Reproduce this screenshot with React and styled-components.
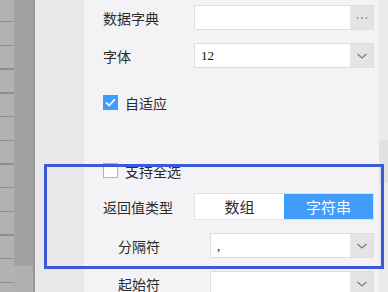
import React from 'react'
import styled, { createGlobalStyle } from 'styled-components'

const Global = createGlobalStyle`
  html, body { margin: 0; padding: 0; }
  body { font-family: "Noto Sans CJK SC", "Noto Sans", sans-serif; }
`

const Page = styled.div`
  position: relative;
  display: flex;
  width: 388px;
  height: 292px;
  overflow: hidden;
  background: #f3f3f5;
`

const RowStrip = styled.div`
  width: 14px;
  background: repeating-linear-gradient(
    to bottom,
    #b2b2b2 0 21px,
    #8e8e8e 21px 22.4px,
    #b2b2b2 22.4px 23.7px
  );
`

const DarkStrip = styled.div`
  width: 19px;
  display: flex;
  flex-direction: column;
  background: #b0b0b0;
`

const DarkFill = styled.div`
  height: 266px;
  background: #a2a2a2;
`

const Divider = styled.div`
  width: 2px;
  background: #979797;
`

const SidePanel = styled.div`
  width: 49px;
  background: #e9e9e9;
`

const Main = styled.div`
  flex: 1;
  display: flex;
  flex-direction: column;
  padding: 5px 5px 0 19px;
  color: #2b2b2b;
  font-size: 14px;
`

const Scrollbar = styled.div`
  width: 9px;
  background: #ebebed;
  display: flex;
  flex-direction: column;
`

const Thumb = styled.div`
  margin-top: 140px;
  height: 43px;
  background: #e1e1e3;
`

const Row = styled.div`
  display: flex;
  align-items: center;
  height: ${p => p.$h || 25}px;
  margin-top: ${p => p.$mt || 0}px;
  padding-left: ${p => (p.$indent ? 15 : 0)}px;
`

const Label = styled.div`
  width: ${p => (p.$indent ? 92 : 91)}px;
  flex: none;
  white-space: nowrap;
  line-height: 20px;
`

const Field = styled.div`
  flex: 1;
  display: flex;
  height: 25px;
  box-sizing: border-box;
  border: 1px solid #dedee0;
  background: #fff;
`

const FieldText = styled.div`
  flex: 1;
  padding-left: 6px;
  font-family: "Liberation Serif", serif;
  font-size: 13px;
  line-height: 23px;
  color: #111;
`

const FieldButton = styled.div`
  width: 23px;
  display: flex;
  align-items: center;
  justify-content: center;
  background: #e4e4e6;
  color: #8a8a8a;
`

const Check = styled.span`
  width: 15px;
  height: 15px;
  box-sizing: border-box;
  margin-right: 7px;
  display: inline-flex;
  align-items: center;
  justify-content: center;
  border: 1px solid ${p => (p.$on ? '#3f9cfb' : '#b5b5b5')};
  background: ${p => (p.$on ? '#3f9cfb' : '#fff')};
`

const Segmented = styled.div`
  flex: 1;
  display: flex;
  height: 27px;
  box-sizing: border-box;
  border: 1px solid #e2e2e4;
  background: #fff;
`

const Segment = styled.div`
  flex: 1;
  display: flex;
  align-items: center;
  justify-content: center;
  font-size: 15px;
  background: ${p => (p.$active ? '#409dfb' : '#fff')};
  color: ${p => (p.$active ? '#fff' : '#2b2b2b')};
`

const Highlight = styled.div`
  position: absolute;
  left: 44px;
  top: 164px;
  width: 340px;
  height: 105px;
  box-sizing: border-box;
  border: 3px solid #3a5ad9;
  pointer-events: none;
`

const Chevron = () => (
  <svg width="12" height="8" viewBox="0 0 12 8">
    <path d="M1.5 2 L6 6 L10.5 2" fill="none" stroke="#7d7d7d" strokeWidth="1.3" />
  </svg>
)

const Dots = () => (
  <svg width="14" height="4" viewBox="0 0 14 4">
    <circle cx="2.5" cy="2" r="1" fill="#9a9a9a" />
    <circle cx="7" cy="2" r="1" fill="#9a9a9a" />
    <circle cx="11.5" cy="2" r="1" fill="#9a9a9a" />
  </svg>
)

const Tick = () => (
  <svg width="11" height="9" viewBox="0 0 11 9">
    <path d="M1.2 4.6 L4.2 7.5 L9.8 1.4" fill="none" stroke="#fff" strokeWidth="1.7" />
  </svg>
)

export default function App() {
  return (
    <Page>
      <Global />
      <RowStrip />
      <DarkStrip>
        <DarkFill />
      </DarkStrip>
      <Divider />
      <SidePanel />
      <Main>
        <Row>
          <Label>数据字典</Label>
          <Field>
            <FieldText />
            <FieldButton><Dots /></FieldButton>
          </Field>
        </Row>
        <Row $mt={13}>
          <Label>字体</Label>
          <Field>
            <FieldText>12</FieldText>
            <FieldButton><Chevron /></FieldButton>
          </Field>
        </Row>
        <Row $h={15} $mt={27}>
          <Check $on><Tick /></Check>
          <span>自适应</span>
        </Row>
        <Row $h={15} $mt={53}>
          <Check />
          <span>支持全选</span>
        </Row>
        <Row $h={27} $mt={15}>
          <Label>返回值类型</Label>
          <Segmented>
            <Segment>数组</Segment>
            <Segment $active>字符串</Segment>
          </Segmented>
        </Row>
        <Row $mt={13} $indent>
          <Label $indent>分隔符</Label>
          <Field>
            <FieldText>,</FieldText>
            <FieldButton><Chevron /></FieldButton>
          </Field>
        </Row>
        <Row $mt={13} $indent>
          <Label $indent>起始符</Label>
          <Field>
            <FieldText />
            <FieldButton><Chevron /></FieldButton>
          </Field>
        </Row>
      </Main>
      <Scrollbar>
        <Thumb />
      </Scrollbar>
      <Highlight />
    </Page>
  )
}
